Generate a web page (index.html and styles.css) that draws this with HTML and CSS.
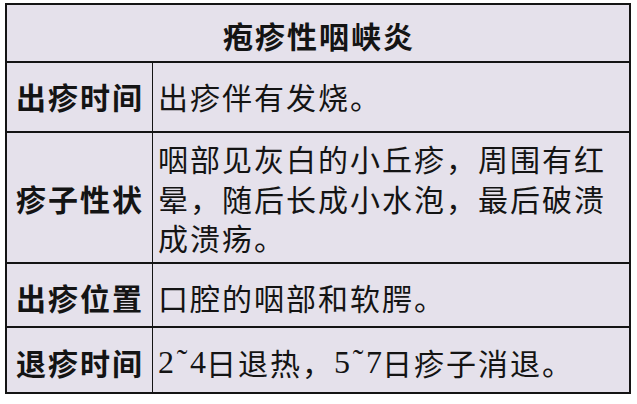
FILE: index.html
```html
<!DOCTYPE html>
<html lang="zh-CN">
<head>
<meta charset="utf-8">
<title>疱疹性咽峡炎</title>
<link rel="stylesheet" href="styles.css">
</head>
<body>
<div class="sheet">
  <div class="cell head">疱疹性咽峡炎</div>

  <div class="cell label r1">出疹时间</div>
  <div class="cell value r1">出疹伴有发烧。</div>

  <div class="cell label r2">疹子性状</div>
  <div class="cell value r2 multi">咽部见灰白的小丘疹，周围有红晕，随后长成小水泡，最后破溃成溃疡。</div>

  <div class="cell label r3">出疹位置</div>
  <div class="cell value r3">口腔的咽部和软腭。</div>

  <div class="cell label r4 last">退疹时间</div>
  <div class="cell value r4 last"><span class="num">2</span><span class="tilde">˜</span><span class="num">4</span>日退热，<span class="num">5</span><span class="tilde">˜</span><span class="num">7</span>日疹子消退。</div>
</div>
</body>
</html>
```

FILE: styles.css
```css
html, body {
  margin: 0;
  padding: 0;
  background: #ffffff;
}

body {
  width: 637px;
  height: 404px;
  overflow: hidden;
  font-family: "Noto Sans CJK SC", "Noto Sans", sans-serif;
  color: #141414;
}

.sheet {
  margin: 3px 0 0 5px;
  width: 622px;
  display: grid;
  grid-template-columns: 146px 1fr;
  grid-template-rows: 58px 70px 131px 64px 64px;
  border: 2px solid #141414;
  background: #e5e1eb;
}

.cell {
  display: flex;
  align-items: center;
  font-size: 30px;
  letter-spacing: 2px;
  line-height: 39.5px;
  border-bottom: 2px solid #141414;
  white-space: normal;
}

.cell.last {
  border-bottom: none;
}

.head {
  grid-column: 1 / span 2;
  justify-content: center;
  font-weight: 700;
  padding-top: 6px;
  padding-left: 2px;
}

.label {
  font-weight: 700;
  padding-left: 9px;
  border-right: 1px solid #141414;
}

.value {
  padding-left: 5px;
  padding-right: 8px;
}

.r3, .r4 {
  padding-top: 5px;
}

.r2 {
  padding-top: 2px;
}

.num {
  font-family: "Liberation Serif", serif;
  font-size: 32px;
  letter-spacing: 0;
}

.tilde {
  display: inline-block;
  width: 16px;
  font-family: "Liberation Serif", serif;
  font-size: 32px;
  letter-spacing: 0;
  text-align: center;
  transform: translateY(-2px);
}
```
